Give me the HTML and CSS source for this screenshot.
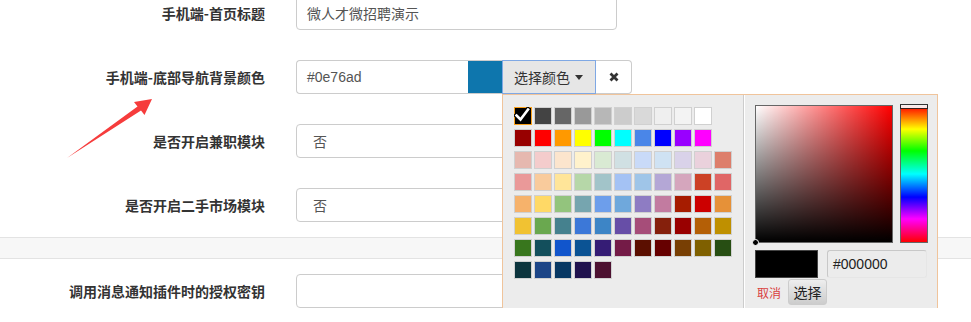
FILE: index.html
```html
<!DOCTYPE html>
<html lang="zh-CN">
<head>
<meta charset="utf-8">
<title>设置</title>
<link rel="stylesheet" href="styles.css">
</head>
<body>
<div class="form">
  <div class="group">
    <div class="row">
      <label class="lbl">手机端-首页标题</label>
      <div class="fc">微人才微招聘演示</div>
    </div>
    <div class="row">
      <label class="lbl">手机端-底部导航背景颜色</label>
      <div class="ig">
        <div class="fc ig-input">#0e76ad</div>
        <div class="ig-swatch"><span class="sw-fill"></span></div>
        <div class="ig-pick">
          <button class="btn-pick">选择颜色<span class="caret"></span></button>
          <div class="sp">
            <div class="sp-palette">
              <div class="sp-row">
                <span class="th th-active" style="background:#000000"><svg viewBox="0 0 16 16" width="16" height="16"><path d="M2.5 8.5 L6.5 12.5 L14 2.5" fill="none" stroke="#000" stroke-width="5" stroke-linecap="square"/><path d="M2.5 8.5 L6.5 12.5 L14 2.5" fill="none" stroke="#fff" stroke-width="2.6" stroke-linecap="square"/></svg></span>
                <span class="th" style="background:#434343"></span>
                <span class="th" style="background:#666666"></span>
                <span class="th" style="background:#999999"></span>
                <span class="th" style="background:#b7b7b7"></span>
                <span class="th" style="background:#cccccc"></span>
                <span class="th" style="background:#d9d9d9"></span>
                <span class="th" style="background:#efefef"></span>
                <span class="th" style="background:#f3f3f3"></span>
                <span class="th" style="background:#ffffff"></span>
              </div>
              <div class="sp-row">
                <span class="th" style="background:#980000"></span>
                <span class="th" style="background:#ff0000"></span>
                <span class="th" style="background:#ff9900"></span>
                <span class="th" style="background:#ffff00"></span>
                <span class="th" style="background:#00ff00"></span>
                <span class="th" style="background:#00ffff"></span>
                <span class="th" style="background:#4a86e8"></span>
                <span class="th" style="background:#0000ff"></span>
                <span class="th" style="background:#9900ff"></span>
                <span class="th" style="background:#ff00ff"></span>
              </div>
              <div class="sp-row">
                <span class="th" style="background:#e6b8af"></span>
                <span class="th" style="background:#f4cccc"></span>
                <span class="th" style="background:#fce5cd"></span>
                <span class="th" style="background:#fff2cc"></span>
                <span class="th" style="background:#d9ead3"></span>
                <span class="th" style="background:#d0e0e3"></span>
                <span class="th" style="background:#c9daf8"></span>
                <span class="th" style="background:#cfe2f3"></span>
                <span class="th" style="background:#d9d2e9"></span>
                <span class="th" style="background:#ead1dc"></span>
                <span class="th" style="background:#dd7e6b"></span>
              </div>
              <div class="sp-row">
                <span class="th" style="background:#ea9999"></span>
                <span class="th" style="background:#f9cb9c"></span>
                <span class="th" style="background:#ffe599"></span>
                <span class="th" style="background:#b6d7a8"></span>
                <span class="th" style="background:#a2c4c9"></span>
                <span class="th" style="background:#a4c2f4"></span>
                <span class="th" style="background:#9fc5e8"></span>
                <span class="th" style="background:#b4a7d6"></span>
                <span class="th" style="background:#d5a6bd"></span>
                <span class="th" style="background:#cc4125"></span>
                <span class="th" style="background:#e06666"></span>
              </div>
              <div class="sp-row">
                <span class="th" style="background:#f6b26b"></span>
                <span class="th" style="background:#ffd966"></span>
                <span class="th" style="background:#93c47d"></span>
                <span class="th" style="background:#76a5af"></span>
                <span class="th" style="background:#6d9eeb"></span>
                <span class="th" style="background:#6fa8dc"></span>
                <span class="th" style="background:#8e7cc3"></span>
                <span class="th" style="background:#c27ba0"></span>
                <span class="th" style="background:#a61c00"></span>
                <span class="th" style="background:#cc0000"></span>
                <span class="th" style="background:#e69138"></span>
              </div>
              <div class="sp-row">
                <span class="th" style="background:#f1c232"></span>
                <span class="th" style="background:#6aa84f"></span>
                <span class="th" style="background:#45818e"></span>
                <span class="th" style="background:#3c78d8"></span>
                <span class="th" style="background:#3d85c6"></span>
                <span class="th" style="background:#674ea7"></span>
                <span class="th" style="background:#a64d79"></span>
                <span class="th" style="background:#85200c"></span>
                <span class="th" style="background:#990000"></span>
                <span class="th" style="background:#b45f06"></span>
                <span class="th" style="background:#bf9000"></span>
              </div>
              <div class="sp-row">
                <span class="th" style="background:#38761d"></span>
                <span class="th" style="background:#134f5c"></span>
                <span class="th" style="background:#1155cc"></span>
                <span class="th" style="background:#0b5394"></span>
                <span class="th" style="background:#351c75"></span>
                <span class="th" style="background:#741b47"></span>
                <span class="th" style="background:#5b0f00"></span>
                <span class="th" style="background:#660000"></span>
                <span class="th" style="background:#783f04"></span>
                <span class="th" style="background:#7f6000"></span>
                <span class="th" style="background:#274e13"></span>
              </div>
              <div class="sp-row">
                <span class="th" style="background:#0c343d"></span>
                <span class="th" style="background:#1c4587"></span>
                <span class="th" style="background:#073763"></span>
                <span class="th" style="background:#20124d"></span>
                <span class="th" style="background:#4c1130"></span>
              </div>
            </div>
            <div class="sp-picker">
              <div class="sp-top">
                <div class="sp-color">
                  <div class="sp-sat"><div class="sp-val"></div></div>
                  <span class="sp-dragger"></span>
                </div>
                <div class="sp-hue"><span class="sp-slider"></span></div>
              </div>
              <div class="sp-mid">
                <div class="sp-preview"></div>
                <div class="sp-input">#000000</div>
              </div>
              <div class="sp-btns">
                <a class="sp-cancel">取消</a>
                <button class="sp-choose">选择</button>
              </div>
            </div>
          </div>
        </div>
        <button class="btn-clear"><svg viewBox="0 0 10 10" width="10" height="10"><path d="M1.5 1.5 L8.5 8.5 M8.5 1.5 L1.5 8.5" stroke="#333" stroke-width="2.8" stroke-linecap="butt"/></svg></button>
      </div>
    </div>
    <div class="row">
      <label class="lbl">是否开启兼职模块</label>
      <div class="fc sel">否</div>
    </div>
    <div class="row">
      <label class="lbl">是否开启二手市场模块</label>
      <div class="fc sel">否</div>
    </div>
  </div>
  <div class="band"></div>
  <div class="group">
    <div class="row">
      <label class="lbl">调用消息通知插件时的授权密钥</label>
      <div class="fc"></div>
    </div>
  </div>
</div>
<svg class="arrow" width="100" height="70" viewBox="60 95 100 70">
  <polygon points="67,158 137.5,106.5 134,102 152,99 144.5,115 141,110.5" fill="#f63c3c"/>
</svg>
</body>
</html>
```
FILE: styles.css
```css
* { box-sizing: border-box; }
body {
  margin: 0;
  background: #fff;
  font-family: "Noto Sans CJK SC", "Liberation Sans", sans-serif;
  font-size: 14px;
  color: #333;
  overflow: hidden;
}
.form { margin-top: -4px; }
.group { display: flex; flex-direction: column; gap: 30px; }
.row {
  display: grid;
  grid-template-columns: 265px 321px;
  column-gap: 31px;
  align-items: center;
}
.lbl {
  text-align: right;
  font-weight: 700;
  font-size: 14px;
  color: #333;
  line-height: 20px;
}
.fc {
  height: 34px;
  border: 1px solid #ccc;
  border-radius: 4px;
  padding: 0 10px;
  display: flex;
  align-items: center;
  color: #555;
  font-size: 14px;
  background: #fff;
}
.sel { padding-left: 16px; }
.band {
  margin: 15px 0;
  height: 22px;
  background: #f7f7f7;
  border-top: 1px solid #e3e3e3;
  border-bottom: 1px solid #e3e3e3;
}
.ig { display: flex; width: 336px; height: 34px; }
.ig-input {
  width: 172px;
  border-radius: 4px 0 0 4px;
  border-right: none;
  font-family: "Liberation Sans", "Noto Sans CJK SC", sans-serif;
}
.ig-swatch {
  width: 34px;
  border-top: 1px solid #ccc;
  border-bottom: 1px solid #ccc;
  display: flex;
}
.sw-fill { flex: 1; background: #0e76ad; }
.ig-pick { position: relative; width: 94px; }
.btn-pick {
  width: 94px;
  height: 34px;
  border: 1px solid #7fa8e4;
  background: #e6e6e6;
  font-family: inherit;
  font-size: 14px;
  color: #333;
  padding: 0 0 0 11px;
  display: flex;
  align-items: center;
  margin: 0;
}
.caret {
  display: inline-block;
  width: 0;
  height: 0;
  margin-left: 5px;
  border-top: 5px solid #333;
  border-left: 4px solid transparent;
  border-right: 4px solid transparent;
}
.btn-clear {
  width: 36px;
  height: 34px;
  margin: 0;
  border: 1px solid #ccc;
  border-left: none;
  border-radius: 0 4px 4px 0;
  background: #fff;
  display: flex;
  align-items: center;
  justify-content: center;
  padding: 0;
}
.sp {
  position: absolute;
  left: 0;
  top: 100%;
  width: 436px;
  height: 219px;
  border: 1px solid #f0c49b;
  background: #ececec;
  display: flex;
  z-index: 10;
}
.sp-palette {
  width: 241px;
  border-right: 1px solid #ccc;
  padding: 12px 0 0 11px;
  display: flex;
  flex-direction: column;
  gap: 4px;
}
.sp-row { display: flex; gap: 2px; }
.th {
  width: 18px;
  height: 18px;
  border: 1px solid #d0d0d0;
  display: block;
}
.th-active { border-color: #f9a11b; }
.th-active svg { display: block; margin: -1px 0 0 -1px; }
.sp-picker {
  flex: 1;
  border-left: 1px solid #fff;
  padding: 10px 0 0 10px;
}
.sp-top { display: flex; gap: 7px; height: 138px; }
.sp-color {
  position: relative;
  width: 138px;
  height: 138px;
  border: 1px solid #666;
  background: #f00;
}
.sp-sat {
  position: absolute;
  inset: 0;
  background: linear-gradient(to right, #fff, rgba(255,255,255,0));
}
.sp-val {
  position: absolute;
  inset: 0;
  background: linear-gradient(to top, #000, rgba(0,0,0,0));
}
.sp-dragger {
  position: absolute;
  left: -4px;
  bottom: -4px;
  width: 7px;
  height: 7px;
  border-radius: 50%;
  background: #000;
  border: 1px solid #fff;
}
.sp-hue {
  position: relative;
  width: 28px;
  height: 138px;
  border: 1px solid #666;
  background: linear-gradient(to bottom, #f00 0%, #ff0 17%, #0f0 33%, #0ff 50%, #00f 67%, #f0f 83%, #f00 100%);
}
.sp-slider {
  position: absolute;
  left: -1px;
  right: -1px;
  top: -2px;
  height: 5px;
  background: #fff;
  border: 1px solid #222;
  opacity: 0.9;
}
.sp-mid { display: flex; gap: 9px; margin-top: 7px; }
.sp-preview {
  width: 63px;
  height: 28px;
  background: #000;
  border: 1px solid #444;
}
.sp-input {
  width: 100px;
  height: 28px;
  border: 1px solid #c8c8c8;
  border-right-color: #e6e6e6;
  border-bottom-color: #e6e6e6;
  border-radius: 3px;
  padding-left: 5px;
  display: flex;
  align-items: center;
  font-family: "Liberation Sans", sans-serif;
  font-size: 14px;
  color: #222;
}
.sp-btns { display: flex; align-items: center; gap: 7px; padding-left: 2px; }
.sp-cancel { color: #d93f3f; font-size: 12px; line-height: 26px; margin-top: 2px; }
.sp-choose {
  width: 39px;
  height: 26px;
  margin: 0;
  padding: 0;
  border: 1px solid #ccc;
  border-radius: 3px;
  background: linear-gradient(to bottom, #eee, #ccc);
  font-family: inherit;
  font-size: 14px;
  color: #222;
}
.arrow {
  position: absolute;
  left: 60px;
  top: 95px;
}
```
